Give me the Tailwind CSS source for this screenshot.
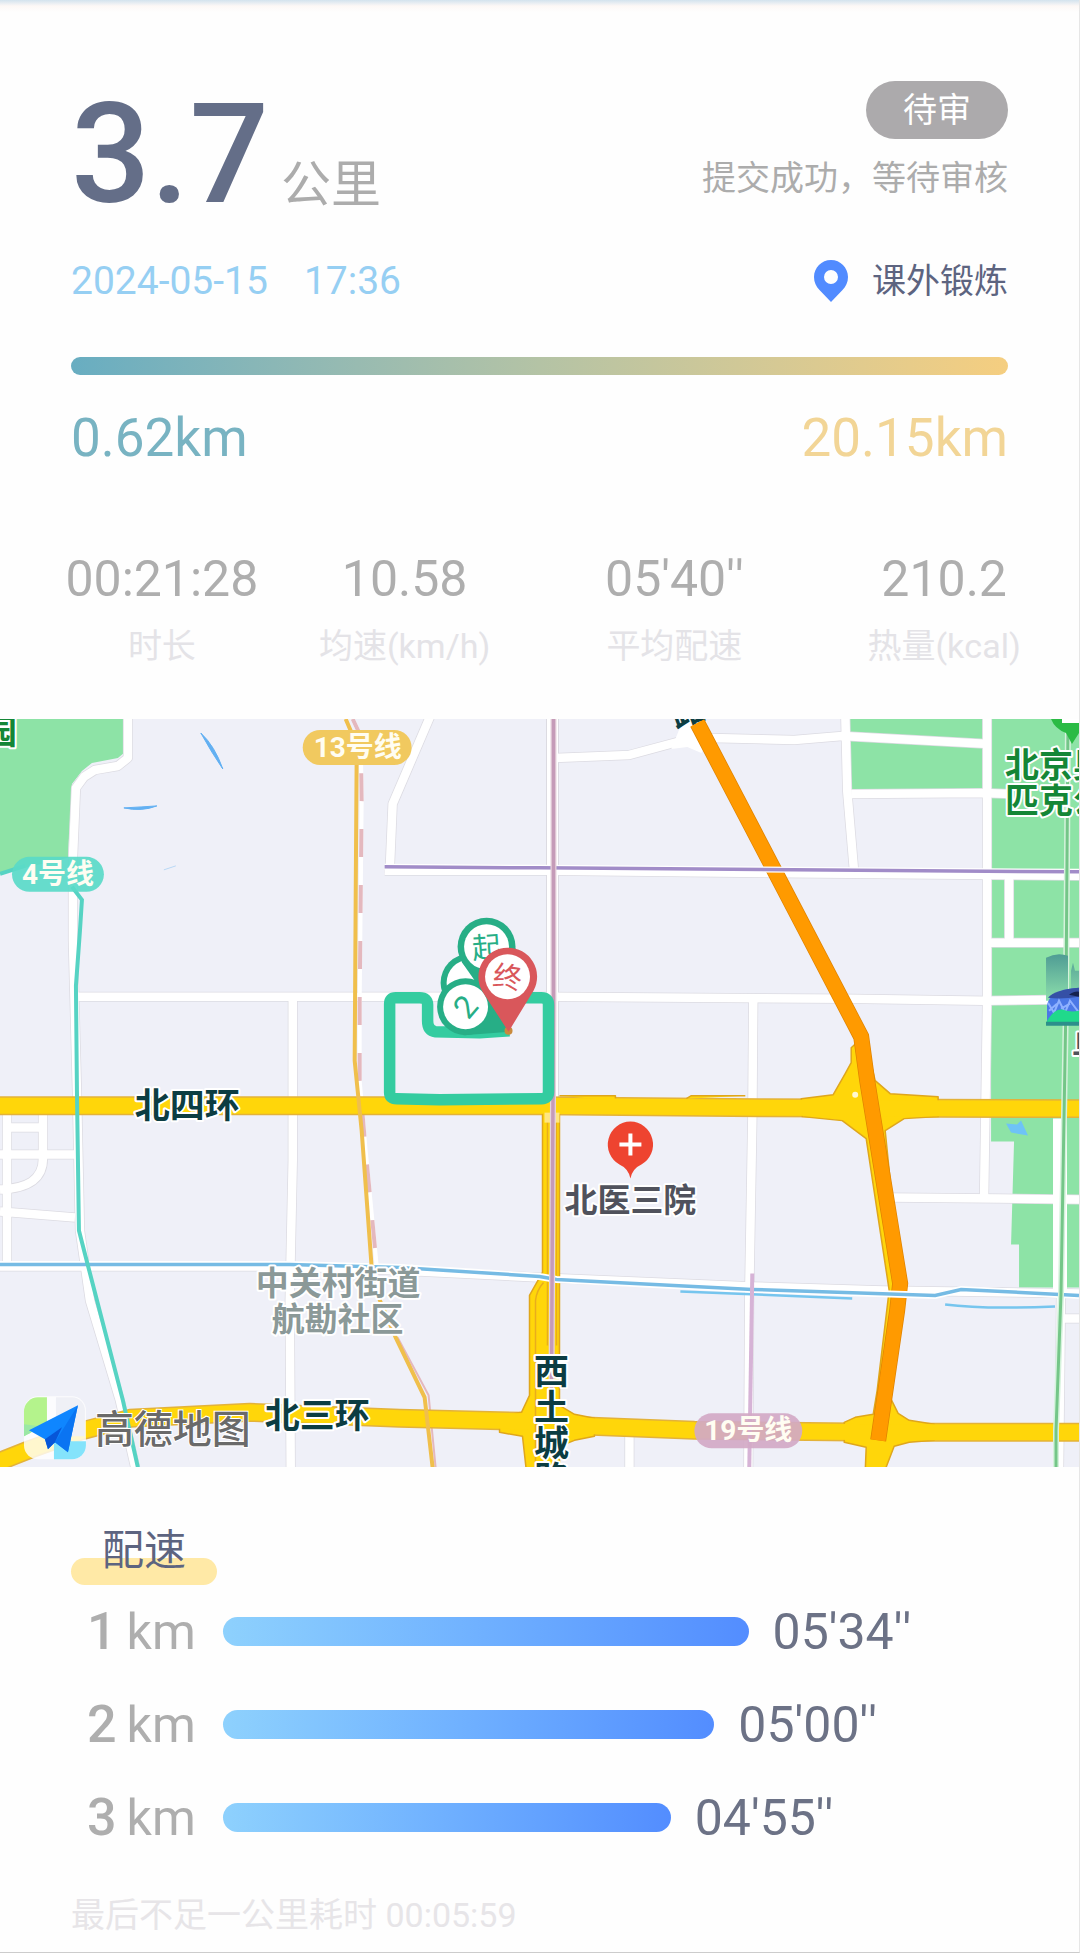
<!DOCTYPE html>
<html lang="zh-CN">
<head>
  <meta charset="UTF-8" />
  <meta name="viewport" content="width=device-width, initial-scale=1.0" />
  <title>跑步记录</title>
  <script src="https://cdn.jsdelivr.net/npm/@tailwindcss/browser@4"></script>
  <style>
    body {
      font-family: Roboto, 'Noto Sans CJK SC', sans-serif;
      font-kerning: none;
    }
  </style>
</head>
<body class="bg-white">
<main class="min-h-screen bg-[#fefefe] border-r border-b border-r-[#e6e6e6] border-b-[#cccccc]">

  <div class="h-3 bg-linear-to-b from-[#d3e3ee] via-[#fdf8f6] to-[#fefefe]"></div>

  <!-- 总里程 -->
  <header class="px-[71px] pt-[69px]">
    <div class="flex justify-between">
      <h1 class="flex items-baseline gap-3 text-[#646e88]">
        <span class="text-[140px] leading-[146px] font-medium">3.7</span>
        <span class="text-[50px] leading-[60px] text-[#acacac]">公里</span>
      </h1>
      <div class="flex flex-col items-end gap-4">
        <span class="rounded-full bg-[#acaaac] px-[37px] text-[34px] leading-[58px] text-white">待审</span>
        <p class="text-[34px] leading-[46px] text-[#acacac]">提交成功，等待审核</p>
      </div>
    </div>
    <div class="mt-7 flex items-center justify-between">
      <time class="flex gap-9 text-[39px] leading-[52px] text-[#96cff3]"><span>2024-05-15</span><span>17:36</span></time>
      <p class="flex items-center gap-6 text-[34px] leading-[52px] text-[#5d6480]">
        <svg class="h-[42px] w-[34px]" viewBox="0 0 34 42">
          <path fill="#518bff" fill-rule="evenodd" d="M17 0C7.600 0 0 7.600 0 17c0 5 2 9.500 5.500 13L17 42l11.500-12C32 26.500 34 22 34 17 34 7.600 26.400 0 17 0zm0 10a7 7 0 1 1 0 14 7 7 0 0 1 0-14z"/>
        </svg>
        课外锻炼
      </p>
    </div>
    <div class="mt-[50px] h-[18px] rounded-full bg-linear-to-r from-[#68adc1] via-[#b4c3a5] to-[#f5ce80]"></div>
    <div class="mt-8 flex justify-between text-[53px] leading-[62px]">
      <span class="text-[#78b3c2]">0.62km</span>
      <span class="text-[#f2d596]">20.15km</span>
    </div>
  </header>

  <!-- 数据 -->
  <dl class="mt-20 grid grid-cols-4 text-center">
    <div class="flex flex-col gap-[14px] pl-[54px]">
      <dd class="text-[50px] leading-[60px] text-[#aeaeae]">00:21:28</dd>
      <dt class="text-[34px] leading-[46px] text-[#e4e3e7]">时长</dt>
    </div>
    <div class="flex flex-col gap-[14px]">
      <dd class="text-[50px] leading-[60px] text-[#aeaeae]">10.58</dd>
      <dt class="text-[34px] leading-[46px] text-[#e4e3e7]">均速(km/h)</dt>
    </div>
    <div class="flex flex-col gap-[14px]">
      <dd class="text-[50px] leading-[60px] text-[#aeaeae]">05'40''</dd>
      <dt class="text-[34px] leading-[46px] text-[#e4e3e7]">平均配速</dt>
    </div>
    <div class="flex flex-col gap-[14px]">
      <dd class="text-[50px] leading-[60px] text-[#aeaeae]">210.2</dd>
      <dt class="text-[34px] leading-[46px] text-[#e4e3e7]">热量(kcal)</dt>
    </div>
  </dl>

  <!-- 轨迹地图 -->
  <svg class="mt-[50px] block h-auto w-full" viewBox="0 718 1080 749" fill="none" role="img" aria-label="轨迹地图">
    <defs>
      <g id="streets" fill="none" stroke-linejoin="round">
        <path d="M128 710V757L118 765 95 769 84 776 76 787 73 857 73 940 77 1090 80 1230 90 1300 120 1400 136 1470"/>
        <path d="M78 996H380L550 996 850 998 985 1000 1052 999"/>
        <path d="M293 996 293 1160 290 1300 291 1470"/>
        <path d="M432 712 393 803 390 872"/>
        <path d="M385 870 555 870 850 873 1085 875"/>
        <path d="M555 757 630 754 678 741 712 737 795 739 843 735 880 737 990 743"/>
        <path d="M846 710 848 790 855 872"/>
        <path d="M852 793 984 792 1012 793"/>
        <path d="M988 710V1000L985 1195"/>
        <path d="M1010 875V942M990 942H1085"/>
        <path d="M890 1197 1000 1198 1085 1199"/>
        <path d="M754 998 753 1120 750 1290 749 1470"/>
        <path d="M0 1266H290L400 1270 540 1277 753 1286 884 1290 1080 1293"/>
        <path d="M7 1110V1264M43 1110V1158C43 1180 26 1188 0 1189M7 1127H43M0 1154H75M0 1211 75 1217"/>
        <path d="M630 1430V1470M1063 1318H1085M1063 1130 1062 1290 1060 1470"/>
      </g>
      <g id="rings" stroke-linejoin="round">
        <path d="M0 1105H540L760 1107 1085 1108"/>
        <path d="M-5 1463 30 1449 80 1431 130 1418 250 1412 400 1418 523 1421 567 1425 695 1430 877 1432 1085 1432"/>
      </g>
      <linearGradient id="tower" x1="0" y1="0" x2="0" y2="1"><stop stop-color="#4f9c94"/><stop offset="1" stop-color="#8ddfac"/></linearGradient>
    </defs>

    <rect y="718" width="1080" height="749" fill="#eff0f8"/>

    <!-- 绿地 -->
    <g fill="#8de3a6">
      <path d="M0 710H124V752L118 757 92 762 82 770 72 783 68 857 0 873z"/>
      <path d="M850 710H984V788L852 789z"/>
      <path d="M992 710H1080V1287H1020V1244H1012L1015 1141H992z"/>
    </g>
    <path d="M1007 1123 1018 1124 1022 1120 1029 1135 1012 1132z" fill="#6ec3f7"/>
    <path d="M201 732Q215 745 223 768Q212 752 201 732zM124 807Q142 811 157 805Q142 806 124 807z" stroke="#62b0f2" fill="#62b0f2"/>
    <path d="M164 869 176 865" stroke="#b9d8f5"/>

    <!-- 街道 -->
    <use href="#streets" stroke="#dcdbe2" stroke-width="10"/>
    <path d="M553 710V1100" stroke="#dcdbe2" stroke-width="13"/>
    <use href="#streets" stroke="#fff" stroke-width="8.500"/>
    <path d="M553 710V1100" stroke="#fff" stroke-width="11"/>
    <path d="M672 748 684 718H706L712 734 702 752 688 746z" fill="#fff"/>
    <path d="M1061 1118V1290" stroke="#fff" stroke-width="14"/>

    <!-- 铁路 -->
    <path d="M353 718 361 735 362 800 360 1000 360 1080 366 1150 377 1265" stroke="#fff" stroke-width="4"/>
    <path d="M353 718 361 735 362 800 360 1000 360 1080 366 1150 377 1265" stroke="#e4b8be" stroke-width="4" stroke-dasharray="28 28"/>
    <path d="M398 1337 429 1395 436 1467" stroke="#e4b8be" stroke-width="2"/>

    <!-- 环路 -->
    <use href="#rings" stroke="#e3b23a" stroke-width="19"/>
    <g fill="#ffd60a" stroke="#dfa61c" stroke-width="1.500" stroke-linejoin="round">
      <path d="M543 1112H560V1405L575 1414 595 1418 595 1436 575 1440 560 1446V1472H527L523 1436 500 1432V1416L522 1412 530 1395V1295L543 1272z"/>
      <path d="M802 1098 834 1094 846 1073 852 1062 852 1047 865 1035 876 1080 891 1093 939 1096V1116L905 1118 886 1130 893 1200 905 1280 900 1310 893 1350 890 1395 899 1413 910 1420 935 1424V1440L910 1442 895 1446 885 1472H866L867 1447 845 1442V1422L856 1417 874 1414 878 1390 890 1290 867 1138 843 1120 803 1116z"/>
      <path d="M560 1095H616V1100M687 1098 692 1095H746"/>
    </g>
    <use href="#rings" stroke="#ffd60a" stroke-width="16"/>
    <path d="M536 1467V1300Q537 1290 544 1282M548 1120V1345M557 1120V1345" stroke="#e9ad1c" stroke-width="1.500"/>
    <path d="M545 1112H560V1122H545z" fill="#ffe680"/>
    <circle cx="856" cy="1094" r="3" fill="#fff8d0"/>

    <text x="674" y="722" class="text-[34px] font-bold" fill="#0c3d42" transform="rotate(-20 690 718)">路</text>

    <!-- 地铁线 -->
    <path d="M698 722 862 1036 868 1080 901 1283 898 1310 879 1440" stroke="#e08400" stroke-width="16"/>
    <path d="M698 722 862 1036 868 1080 901 1283 898 1310 879 1440" stroke="#ff9a00" stroke-width="14.500"/>
    <path d="M0 1264H290L400 1267 540 1276 557 1279 753 1289 936 1295 962 1289 1080 1295" stroke="#fff" stroke-width="7"/>
    <path d="M0 1264H290L400 1267 540 1276 557 1279 753 1289 936 1295 962 1289 1080 1295" stroke="#76bbe4" stroke-width="3.500"/>
    <path d="M681 1291 853 1298M946 1304Q984 1309 1056 1306" stroke="#76c5ee" stroke-width="2.500"/>
    <path d="M385 866 540 867 1080 871" stroke="#fff" stroke-width="6"/>
    <path d="M385 866 540 867 1080 871" stroke="#a18cc8" stroke-width="3.500"/>
    <path d="M554 718 554 1000 552 1390" stroke="#e6d3dc" stroke-width="6"/>
    <path d="M554 718 554 1000 552 1390" stroke="#c59bb8" stroke-width="3.500"/>
    <path d="M753 1273 750 1467" stroke="#d6b3d6" stroke-width="4"/>
    <path d="M1069 718 1067 1000 1062 1293 1057 1430 1057 1467" stroke="#d5f2dc" stroke-width="6"/>
    <path d="M1069 718 1067 1000 1062 1293 1057 1430 1057 1467" stroke="#74c688" stroke-width="3"/>
    <path d="M0 873 25 865M72 886 82 899 80 930 76 985 77 1090 79 1230 88 1265 123 1400 138 1467" stroke="#56d3c3" stroke-width="4"/>
    <path d="M346 718 352 732M357 755 356 900 355 1060 358 1090 362 1130 372 1267 379 1297 396 1337 425 1397 433 1467" stroke="#f0bf4c" stroke-width="4"/>

    <!-- 线路名 -->
    <rect x="303" y="729" width="109" height="35" rx="17.500" fill="#f1c95f"/>
    <rect x="12" y="856" width="92" height="35" rx="17.500" fill="#5adac8" fill-opacity=".92"/>
    <rect x="695" y="1413" width="108" height="35" rx="17.500" fill="#d3a9c6" fill-opacity=".92"/>
    <g fill="#fffdf2" class="text-[28px] font-bold" text-anchor="middle">
      <text x="358" y="756">13号线</text>
      <text x="58" y="883">4号线</text>
      <text x="749" y="1440">19号线</text>
    </g>

    <!-- 地名 -->
    <g paint-order="stroke" stroke="#fff" stroke-width="4" stroke-linejoin="round">
      <g class="text-[35px] font-bold" fill="#0c3d42">
        <text x="135" y="1117">北四环</text>
        <text x="265" y="1428">北三环</text>
        <g text-anchor="middle">
          <text x="552" y="1384">西</text>
          <text x="552" y="1420">土</text>
          <text x="552" y="1456">城</text>
          <text x="552" y="1492">路</text>
        </g>
      </g>
      <g class="text-[33px] font-bold" fill="#8b9998">
        <text x="256" y="1295">中关村街道</text>
        <text x="272" y="1331">航勘社区</text>
      </g>
      <g class="text-[33px] font-bold" fill="#50525c">
        <text x="565" y="1211">北医三院</text>
        <text x="1073" y="1057">鸟巢</text>
      </g>
      <g class="text-[34px] font-bold" fill="#148636">
        <text x="-17" y="743">园</text>
        <text x="1006" y="776">北京奥林</text>
        <text x="1006" y="812">匹克公园</text>
      </g>
    </g>
    <path d="M1052 718Q1056 728 1067 732L1073 743 1080 732V718z" fill="#2bbb45"/>
    <path d="M1063 718H1080V722H1063z" fill="#fff"/>

    <!-- 鸟巢 -->
    <path d="M1047 957Q1058 951 1069 955V1000H1047zM1072 970 1074 962 1076 970H1080V1000H1072z" fill="url(#tower)"/>
    <path d="M1048 1005Q1050 989 1080 987V1022H1048z" fill="#4b78e6"/>
    <path d="M1049 997Q1056 989 1080 987V996Q1062 999 1049 997z" fill="#3550a6"/>
    <path d="M1070 994Q1076 990 1080 991V996z" fill="#15224f"/>
    <path d="M1049 1002 1055 1012 1060 1000 1066 1012 1071 1000 1080 1012M1050 1010 1058 1003M1062 1008 1071 1003" stroke="#8fb1ff" stroke-width="2"/>
    <path d="M1047 1022Q1055 1007 1064 1009 1072 1012 1080 1010V1023H1047z" fill="#20d98b"/>
    <path d="M1047 1021H1080V1025H1047z" fill="#2c8f8b"/>

    <!-- 医院 -->
    <path d="M631 1121A23 23 0 0 0 620 1164Q629 1168 631 1178 633 1168 642 1164A23 23 0 0 0 631 1121z" fill="#ee4430"/>
    <path d="M620 1144H642M631 1133V1155" stroke="#fff" stroke-width="4"/>

    <!-- 跑步轨迹 -->
    <path d="M510 1030 480 1032 436 1031Q428 1030 428 1020V1004Q428 997 420 997H396Q390 997 390 1003V1092Q390 1098 397 1098L440 1099 542 1098Q549 1098 549 1091V1004Q549 997 542 997H505" stroke="#34cca0" stroke-width="11.500" stroke-linejoin="round"/>
    <circle cx="470" cy="982" r="29" fill="#27ae86"/>
    <circle cx="470" cy="982" r="23" fill="#fff"/>
    <path d="M462 961 511 1031 516 947z" fill="#27ae86"/>
    <circle cx="487" cy="946" r="29" fill="#27ae86"/>
    <circle cx="487" cy="946" r="22.500" fill="#fff"/>
    <text x="487" y="957" text-anchor="middle" class="text-[29px]" fill="#27ae86" transform="rotate(-4 487 946)">起</text>
    <path d="M464 1034.500 511 1031 484 983z" fill="#27ae86"/>
    <circle cx="466" cy="1006" r="28.500" fill="#27ae86"/>
    <circle cx="466" cy="1006" r="22.500" fill="#fff"/>
    <text x="466" y="1017" text-anchor="middle" class="text-[32px]" fill="#27ae86" transform="rotate(-50 466 1006)">2</text>
    <circle cx="509" cy="1030" r="4" fill="#c98a3c"/>
    <path d="M508 947A29 29 0 0 0 483 991L509 1031 534 990A29 29 0 0 0 508 947z" fill="#d9575b"/>
    <circle cx="508" cy="976" r="22.500" fill="#fff"/>
    <text x="508" y="987" text-anchor="middle" class="text-[29px]" fill="#d9575b" transform="rotate(8 508 976)">终</text>

    <!-- 高德地图 -->
    <g>
      <rect x="24" y="1396" width="62" height="63" rx="14" fill="#fff" fill-opacity=".8"/>
      <path d="M56 1397H72A13 13 0 0 1 85 1410V1436H56z" fill="#eff0f6"/>
      <path d="M47 1397V1422L24 1436V1411A14 14 0 0 1 38 1397z" fill="#b4f38c"/>
      <path d="M24 1436V1424L40 1426 30 1433z" fill="#9be8a5"/>
      <path d="M54 1441H86V1445A14 14 0 0 1 72 1459H54z" fill="#84e3fb"/>
      <path d="M78 1405 29 1430 45 1439 48 1449 55 1442 68 1452z" fill="#0f86ff"/>
      <path d="M78 1405 55 1442 68 1452z" fill="#0a74f2"/>
      <path d="M45 1439 48 1449 55 1442 62 1427z" fill="#0756d8"/>
      <text x="95" y="1443" class="text-[39px] font-medium" fill="#6a6a6a" stroke="#fff" stroke-width="2" paint-order="stroke">高德地图</text>
    </g>
  </svg>

  <!-- 配速 -->
  <section class="pt-14 pl-[71px]">
    <h2 class="relative isolate w-[146px] text-center text-[42px] leading-[56px] text-[#5d6480]">
      <span class="absolute inset-x-0 top-[35px] -z-10 h-[27px] rounded-full bg-[#ffe9a6]"></span>
      配速
    </h2>
    <ol id="paceList" class="mt-[6px]"></ol>
    <p class="mt-7 text-[34px] leading-[46px] text-[#e7e5e8]">最后不足一公里耗时 00:05:59</p>
  </section>
</main>

<script>
  const paceList = [
    { km: 1, time: "05'34''", width: 61.4 },
    { km: 2, time: "05'00''", width: 57.4 },
    { km: 3, time: "04'55''", width: 52.3 }
  ];

  document.getElementById('paceList').innerHTML = paceList.map(p => `
    <li class="flex h-[93px] items-center text-[50px] leading-[60px] text-[#aeaeae]">
      <span class="flex w-[152px] items-baseline gap-[10px] pl-4"><b class="text-[52px] font-medium">${p.km}</b>km</span>
      <span class="flex flex-1 items-center gap-6">
        <span class="h-[29px] rounded-full bg-linear-to-r from-[#8ed1fd] to-[#538dff]" style="width: ${p.width}%"></span>
        <span class="text-[#6c7286]">${p.time}</span>
      </span>
    </li>
  `).join('');
</script>
</body>
</html>
